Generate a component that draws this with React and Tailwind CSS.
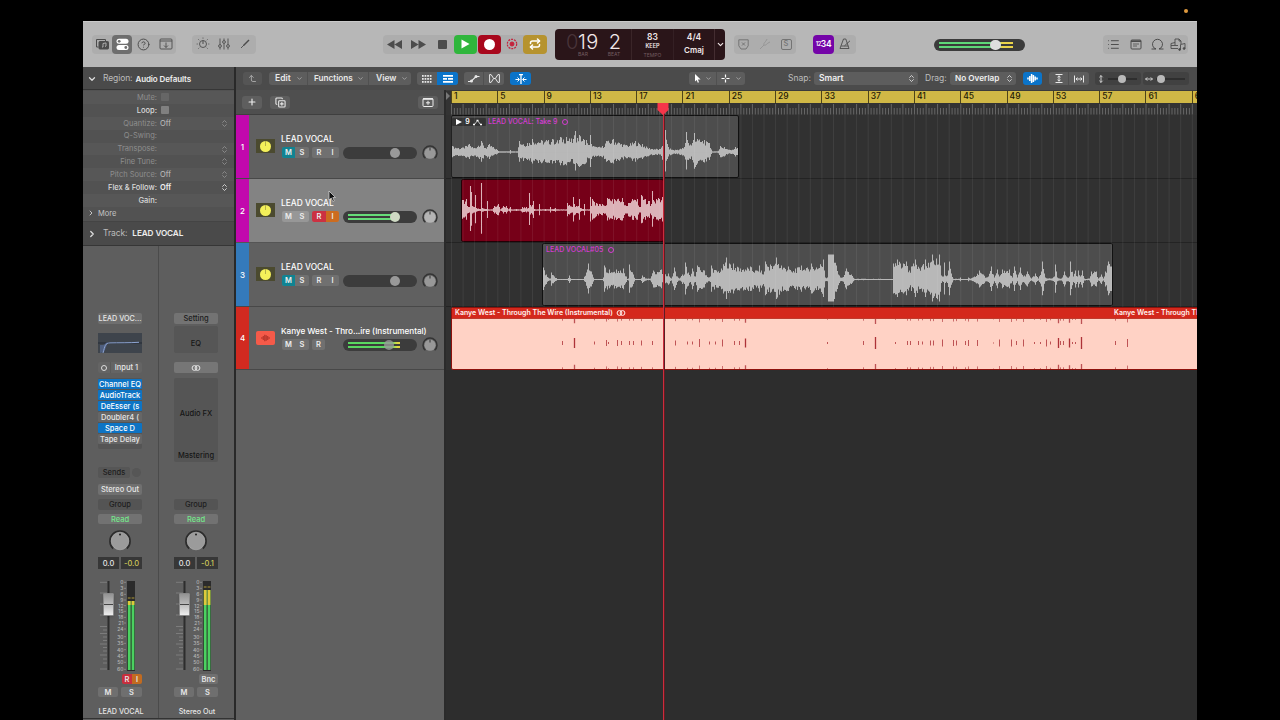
import React from 'react';
import {
    ChevronDown, ChevronRight, ChevronsUpDown, CircleHelp, Plus, Repeat, CornerLeftUp, List,
    CopyPlus, MoveHorizontal, MoveVertical,
} from 'lucide-react';

const BAR = 11.575;

const TAKE_WAVE = [[0, 6], [9, 4], [17, 8], [22, 4], [29, 11], [33, 4], [37, 8], [44, 3], [47, 0.6], [57, 0.6], [58, 2], [59, 0.6], [65, 0.6], [67, 11], [75, 9], [80, 13], [94, 12], [100, 13], [107, 12], [108, 15], [114, 15], [121, 13], [123, 21], [125, 14], [127, 17], [134, 12], [136, 7], [137, 7], [138, 17], [139, 8], [144, 5], [150, 6], [154, 11], [161, 13], [174, 7], [183, 11], [190, 8], [197, 4], [208, 3], [211, 12], [213, 22], [215, 8], [216, 5], [221, 2], [230, 4], [232, 5], [234, 20], [236, 9], [240, 9], [242, 19], [245, 13], [252, 12], [257, 9], [260, 0.6], [265, 0.6], [268, 6], [272, 5], [278, 2], [283, 5], [286, 4]];
const RECORD_WAVE = [[0, 10], [4, 11], [5, 4], [7, 3], [8, 24], [9, 18], [10, 4], [12, 3], [13, 15], [14, 2], [18, 1], [19, 27], [20, 2], [24, 1], [25, 9], [26, 0.5], [30, 0.5], [32, 4], [36, 6], [38, 0.5], [41, 4], [44, 4], [46, 0.5], [48, 3], [49, 0.5], [53, 0.5], [54, 1], [55, 0.5], [58, 0.5], [60, 3], [64, 3], [66, 2], [67, 17], [68, 5], [70, 5], [71, 9], [72, 1], [73, 0.5], [76, 0.5], [77, 6], [78, 0.5], [82, 0.5], [83, 1], [84, 0.5], [87, 0.5], [88, 3], [89, 0.5], [93, 2], [94, 0.5], [104, 0.5], [105, 7], [107, 5], [110, 3], [111, 13], [112, 6], [116, 4], [117, 11], [118, 2], [121, 1], [122, 6], [123, 0.5], [127, 0.5], [128, 13], [129, 4], [130, 11], [134, 7], [140, 6], [143, 4], [145, 12], [152, 11], [160, 12], [164, 4], [165, 4], [166, 7], [170, 11], [175, 11], [177, 3], [178, 3], [179, 15], [183, 11], [187, 9], [188, 4], [189, 6], [190, 19], [191, 10], [196, 12], [200, 13]];
const VOCAL_WAVE = [[0, 12], [3, 5], [6, 1], [7, 1], [8, 7], [11, 3], [14, 0.6], [24, 0.6], [26, 4], [28, 0.6], [40, 0.6], [43, 7], [45, 16], [48, 8], [49, 5], [51, 0.6], [59, 0.6], [60, 2], [61, 14], [66, 10], [73, 10], [80, 11], [83, 3], [84, 0.6], [85, 1], [86, 15], [90, 5], [92, 0.6], [97, 0.6], [99, 4], [103, 1], [107, 1], [110, 9], [118, 10], [120, 1], [121, 5], [125, 6], [128, 1], [131, 12], [134, 3], [136, 1], [139, 5], [141, 5], [142, 17], [145, 7], [147, 3], [149, 11], [152, 3], [154, 14], [161, 9], [165, 2], [167, 3], [168, 14], [173, 9], [178, 11], [183, 22], [187, 15], [190, 16], [195, 12], [207, 13], [213, 9], [216, 14], [220, 5], [221, 8], [222, 18], [227, 15], [231, 14], [233, 22], [238, 14], [245, 13], [248, 8], [252, 11], [258, 14], [261, 10], [268, 16], [273, 12], [280, 20], [281, 9], [282, 2], [284, 2], [285, 25], [290, 25], [293, 14], [296, 4], [299, 2], [303, 11], [308, 5], [311, 0.8], [349, 0.6], [350, 16], [354, 20], [360, 16], [363, 18], [366, 9], [368, 13], [372, 20], [376, 11], [379, 14], [382, 20], [387, 17], [389, 25], [393, 21], [396, 25], [397, 14], [398, 4], [400, 3], [401, 17], [402, 4], [404, 4], [406, 18], [408, 6], [410, 0.8], [416, 0.8], [417, 2], [418, 0.6], [424, 0.6], [425, 2], [427, 0.8], [431, 3], [436, 9], [440, 5], [443, 2], [445, 3], [448, 13], [451, 2], [454, 10], [456, 3], [459, 10], [463, 8], [466, 10], [469, 2], [471, 13], [474, 2], [477, 12], [480, 3], [484, 8], [488, 1], [492, 6], [495, 1], [498, 8], [499, 18], [502, 2], [508, 1], [511, 3], [512, 15], [514, 2], [518, 1], [521, 8], [524, 2], [526, 3], [527, 18], [530, 3], [532, 9], [534, 3], [535, 9], [537, 3], [539, 9], [541, 1], [546, 1], [548, 8], [553, 8], [555, 1], [558, 5], [560, 1], [562, 8], [565, 18], [567, 13], [568, 13]];

// x offset and half height of every drum hit in the instrumental
const HITS = [[111, 2], [123, 5], [143, 1.5], [155, 3], [157, 1], [166, 3], [170, 2], [178, 2], [182, 2], [190, 2.5], [201, 2], [212, 4], [224, 2.5], [236, 1.5], [241, 1.5], [248, 4], [258, 1.5], [264, 1.5], [271, 3.5], [283, 2], [288, 2], [294, 4.5], [376, 1], [412, 2], [424, 6], [444, 1], [456, 2], [459, 2], [467, 2], [471, 1.5], [479, 2.5], [482, 2.5], [491, 3.5], [502, 3], [505, 2.5], [514, 2], [517, 3], [526, 3], [542, 0.5], [548, 3.5], [560, 3.5], [565, 2], [572, 3.5], [583, 1], [589, 1], [595, 3.5], [599, 1.5], [607, 5], [609, 2], [612, 2], [618, 4.5], [621, 1], [624, 1], [630, 6], [664, 2], [676, 4]];

function noise(n) {
    const v = Math.sin(n * 12.9898) * 43758.5453;
    return v - Math.floor(v);
}

function wavePath(points, mid) {
    const last = points[points.length - 1][0];
    let path = '';
    let seg = 0;
    for (let x = 0; x <= last; x += 1) {
        while (seg < points.length - 2 && points[seg + 1][0] < x) seg += 1;
        const [x0, a0] = points[seg];
        const [x1, a1] = points[seg + 1];
        const amp = a0 + ((a1 - a0) * (x - x0)) / (x1 - x0);
        const keep = amp > 24.5 || x === x1 || x === x0;
        const up = keep ? 1 : 0.55 + 0.45 * noise(x);
        const down = keep ? 0.88 : 0.5 + 0.42 * noise(x + 500);
        path += `M${x + 0.5} ${(mid - amp * up).toFixed(1)}V${(mid + amp * down).toFixed(1)}`;
    }
    return path;
}

function Wave({ points, mid, className }) {
    return (
        <svg className={`absolute inset-0 h-full w-full ${className}`}>
            <path d={wavePath(points, mid)} stroke="currentColor" strokeWidth="1.05" />
            <path d={`M0 ${mid}H${points[points.length - 1][0]}`} stroke="currentColor" strokeWidth="0.8" />
        </svg>
    );
}

function ToolGroup({ className, children }) {
    return <div className={`flex h-[19px] shrink-0 items-center rounded-[4px] bg-[#adadad] text-[#4c4c4c] ${className}`}>{children}</div>;
}

function Cell({ className = '', children }) {
    return <div className={`flex h-full shrink-0 items-center justify-center ${className}`}>{children}</div>;
}

function Lcd() {
    return (
        <div className="ml-2 flex h-[31px] w-[170px] shrink-0 rounded-[4px] bg-[#2a1519] text-[#f2e8e9]">
            <div className="flex w-[77px] border-r border-[#3a2528] pl-[11px]">
                <div className="w-[41px]">
                    <div className="flex h-[23px] pt-[1px] text-[20px] font-light leading-[24px]">
                        <span className="w-[12px] text-[#49343a]">0</span>
                        <span className="tracking-[0.5px]">19</span>
                    </div>
                    <div className="pl-[12px] text-[5px] leading-[5px] text-[#725b60]">BAR</div>
                </div>
                <div className="w-[16px] text-center">
                    <div className="h-[23px] pt-[1px] text-[20px] font-light leading-[24px]">2</div>
                    <div className="-ml-[2px] text-[5px] leading-[5px] text-[#725b60]">BEAT</div>
                </div>
            </div>
            <div className="flex w-[41px] flex-col items-center pt-[3px] font-semibold">
                <div className="text-[8.5px] leading-[10px]">83</div>
                <div className="text-[5.5px] leading-[9px]">KEEP</div>
                <div className="text-[5px] font-normal leading-[9px] text-[#725b60]">TEMPO</div>
            </div>
            <div className="flex w-[41px] flex-col items-center border-l border-[#342024] pt-[2px] text-[8.5px] font-semibold">
                <div className="leading-[12px]">4/4</div>
                <div className="leading-[14px] text-[8px]">Cmaj</div>
            </div>
            <div className="flex items-center border-l border-[#442d31] pl-px"><ChevronDown size={9} strokeWidth={3} /></div>
        </div>
    );
}

function Toolbar() {
    return (
        <div className="flex h-[46px] items-center border-t border-[#c9c9c9] bg-[#b7b7b7] pb-[1px] pl-[9px]">
            <ToolGroup className="w-[84px]">
                <Cell className="w-[20px]">
                    <svg width="15" height="12" viewBox="0 0 15 12" fill="none" stroke="currentColor">
                        <path d="M3.5 9H1.5V1.5h9V3" />
                        <rect x="4" y="3.5" width="9.5" height="7.5" rx="0.8" fill="currentColor" />
                        <path d="M8 9V5.5l3-.6V8M8 9H7M11 8.3h-1" stroke="#b7b7b7" strokeWidth="0.9" />
                    </svg>
                </Cell>
                <Cell className="w-[20px] rounded-[4px] bg-[#6e6e6e] text-white">
                    <svg width="13" height="13" viewBox="0 0 13 13">
                        <rect x="0.5" y="0.8" width="12" height="5" rx="2.5" fill="white" />
                        <rect x="0.5" y="7" width="12" height="5" rx="2.5" fill="white" />
                        <circle cx="3.2" cy="3.3" r="1.4" fill="#6e6e6e" />
                        <circle cx="9.8" cy="9.5" r="1.4" fill="#6e6e6e" />
                    </svg>
                </Cell>
                <Cell className="w-[23px]"><CircleHelp size={13} strokeWidth={1.8} /></Cell>
                <Cell className="w-[21px]">
                    <svg width="14" height="12" viewBox="0 0 14 12" fill="none" stroke="currentColor" strokeWidth="0.9">
                        <rect x="1" y="1" width="12" height="10" rx="1" />
                        <path d="M1 3h12M7 4.5v5M5 7.5l2 2 2-2" />
                    </svg>
                </Cell>
            </ToolGroup>
            <ToolGroup className="ml-4 w-[64px]">
                <Cell className="w-[21px]">
                    <svg width="14" height="14" viewBox="0 0 14 14" fill="none" stroke="currentColor">
                        <circle cx="7" cy="7" r="3.5" strokeWidth="0.9" />
                        <path d="M7 3.5V7" />
                        <path d="M7 .6v1M.7 7h1M12.3 7h1M2.4 2.4l.8.8M11.6 2.4l-.8.8M2.4 11.6l.8-.8M11.6 11.6l-.8-.8" strokeWidth="0.9" />
                    </svg>
                </Cell>
                <Cell className="w-[22px]">
                    <svg width="12" height="12" viewBox="0 0 12 12" fill="none" stroke="currentColor" strokeWidth="0.9">
                        <path d="M2 .5v6M2 9.5v2M6 .5v2M6 5.5v6M10 .5v6M10 9.5v2" />
                        <circle cx="2" cy="8" r="1.4" />
                        <circle cx="6" cy="4" r="1.4" />
                        <circle cx="10" cy="8" r="1.4" />
                    </svg>
                </Cell>
                <Cell className="w-[20px]">
                    <svg width="10" height="10" viewBox="0 0 10 10" stroke="currentColor"><path d="M1 9l3-3" strokeWidth="0.9" /><path d="M3.5 6.5L9 1" strokeWidth="1.4" /></svg>
                </Cell>
            </ToolGroup>
            <ToolGroup className="ml-[127px] w-[164px]">
                <Cell className="w-[22px]"><svg width="15" height="9" viewBox="0 0 15 9" fill="currentColor"><path d="M7.5 0v9L0 4.5zM15 0v9L7.5 4.5z" /></svg></Cell>
                <Cell className="w-[26px]"><svg width="15" height="9" viewBox="0 0 15 9" fill="currentColor"><path d="M0 0v9l7.5-4.5zM7.5 0v9L15 4.5z" /></svg></Cell>
                <Cell className="w-[22px]"><div className="h-[9px] w-[9px] rounded-[1px] bg-[#4c4c4c]" /></Cell>
                <Cell className="ml-px w-[23px] rounded-[4px] bg-[#2fb63c]">
                    <svg width="9" height="10" viewBox="0 0 9 10" fill="white"><path d="M.5.5v9l8-4.5z" /></svg>
                </Cell>
                <Cell className="ml-px w-[23px] rounded-[4px] bg-[#a8071c]"><div className="h-[11px] w-[11px] rounded-full bg-white" /></Cell>
                <Cell className="w-[22px]">
                    <svg width="12" height="12" viewBox="0 0 12 12" fill="none" stroke="#c4233c">
                        <circle cx="6" cy="6" r="4.7" strokeWidth="1.2" strokeDasharray="2 0.95" />
                        <circle cx="6" cy="6" r="2" fill="#c4233c" />
                    </svg>
                </Cell>
                <Cell className="w-[24px] rounded-[4px] bg-[#b6932f] text-white"><Repeat size={12} strokeWidth={3} /></Cell>
            </ToolGroup>
            <Lcd />
            <ToolGroup className="ml-[9px] w-[62px] text-[#747474]">
                <Cell className="w-[19px]">
                    <svg width="11" height="11" viewBox="0 0 11 11" fill="none" stroke="currentColor"><path d="M.8.8h9.4v6L8 10H3L.8 6.8zM4 3.5l3 3M7 3.5l-3 3" /></svg>
                </Cell>
                <Cell className="w-[23px] text-[#969696]">
                    <svg width="12" height="12" viewBox="0 0 12 12" fill="none" stroke="currentColor"><path d="M1 11l4-4M5 7c-1-2 2-3 3-6M5 7c2 1 3-2 6-3" /></svg>
                </Cell>
                <Cell className="w-[20px]"><div className="flex h-[11px] w-[11px] items-center justify-center rounded-[2px] border border-current text-[7.5px] font-medium">S</div></Cell>
            </ToolGroup>
            <ToolGroup className="ml-[17px] w-[43px]">
                <Cell className="w-[21px] rounded-[4px] bg-[#7404a8] font-semibold tracking-[-0.3px] text-white">
                    <span className="text-[5.5px]">12</span><span className="text-[8.5px]">34</span>
                </Cell>
                <Cell className="w-[22px]">
                    <svg width="12" height="12" viewBox="0 0 12 12" fill="none" stroke="currentColor"><path d="M4.5 1h2.3L10 10.5H1zM2.2 8h7M5.5 7.8L11 2.8" strokeWidth="0.9" /></svg>
                </Cell>
            </ToolGroup>
            <div className="ml-[78px] mt-[1px] flex h-[12px] w-[91px] shrink-0 items-center rounded-full bg-[#3b3b3b] px-[5px]">
                <div className="relative flex w-[74px] flex-col gap-[2px]">
                    <div className="h-[2px] bg-linear-to-r from-[#5fd878] from-80% to-[#ead34a] to-85%" />
                    <div className="h-[2px] bg-linear-to-r from-[#5fd878] from-80% to-[#ead34a] to-85%" />
                    <div className="absolute -top-[2px] left-[51px] h-[10px] w-[11px] rounded-full bg-[#dedede]" />
                </div>
            </div>
            <ToolGroup className="ml-[78px] w-[85px]">
                <Cell className="w-[21px]"><List size={13} strokeWidth={1.8} /></Cell>
                <Cell className="w-[23px]">
                    <svg width="12" height="11" viewBox="0 0 12 11" fill="none" stroke="currentColor"><rect x="1" y="1" width="10" height="9" rx="1" /><path d="M1 2.2h10" strokeWidth="1.6" /><path d="M3 5h6M3 7h4" strokeWidth="0.8" /></svg>
                </Cell>
                <Cell className="w-[20px]">
                    <svg width="13" height="12" viewBox="0 0 13 12" fill="none" stroke="currentColor"><path d="M.5 11h4.300a5 5 0 1 1 3.400 0h4.300M4.800 11L4 10M8.200 11L9 10" /></svg>
                </Cell>
                <Cell className="w-[21px]">
                    <svg width="16" height="13" viewBox="0 0 16 13" fill="none" stroke="currentColor" strokeWidth="0.9">
                        <path d="M5 4.5L1 5.5v5h7M1 7.5h7M5 7V1h4l2 2v3M9 1v2h2" />
                        <path d="M10.5 11.5V6.5L15 5.5v5" />
                        <circle cx="9.6" cy="11.5" r=".9" fill="currentColor" />
                        <circle cx="14.1" cy="10.5" r=".9" fill="currentColor" />
                    </svg>
                </Cell>
            </ToolGroup>
        </div>
    );
}

const REGION_PARAMS = [
    { label: 'Mute:', box: true, dim: true },
    { label: 'Loop:', box: true },
    { label: 'Quantize:', value: 'Off', arrows: true, dim: true },
    { label: 'Q-Swing:', dim: true },
    { label: 'Transpose:', arrows: true, dim: true },
    { label: 'Fine Tune:', arrows: true, dim: true },
    { label: 'Pitch Source:', value: 'Off', arrows: true, dim: true },
    { label: 'Flex & Follow:', value: 'Off', arrows: true },
    { label: 'Gain:' },
];

function RegionInspector() {
    return (
        <div>
            <div className="flex h-[23px] items-center border-b border-[#363636] bg-[#4a4a4a] pl-[4px] pt-[1px] text-[8.5px] tracking-[-0.1px]">
                <ChevronDown size={10} strokeWidth={3} className="text-[#ddd]" />
                <span className="ml-[6px] text-[#bcbcbc]">Region:</span>
                <span className="ml-[3px] whitespace-nowrap text-[8px] font-semibold text-[#eee]">Audio Defaults</span>
            </div>
            <div className="h-[131px] bg-[#525252] pt-[1px]">
                {REGION_PARAMS.map((p) => (
                    <div key={p.label} className={`flex h-[12.9px] items-center text-[7.5px] odd:bg-[#575757] ${p.dim ? 'text-[#8e8e8e]' : 'font-medium text-[#dadada]'}`}>
                        <span className="w-[74px] text-right">{p.label}</span>
                        {p.box && <span className={`ml-[4px] h-[8px] w-[8px] rounded-[1px] ${p.dim ? 'bg-[#666]' : 'bg-[#808080]'}`} />}
                        <span className={`ml-[3px] ${p.dim ? 'text-[#c0c0c0]' : 'font-semibold text-[#f0f0f0]'}`}>{p.value}</span>
                        {p.arrows && <ChevronsUpDown size={9} strokeWidth={2.4} className="ml-auto mr-[5px]" />}
                    </div>
                ))}
                <div className="flex h-[12.9px] items-center pl-[4px] text-[7.5px] text-[#c4c4c4]">
                    <ChevronRight size={8} strokeWidth={3} />
                    <span className="ml-[3px]">More</span>
                </div>
            </div>
            <div className="flex h-[25px] items-center border-b border-t border-[#363636] border-t-[#444] bg-[#4a4a4a] pl-[4px] text-[8.5px] tracking-[-0.1px]">
                <ChevronRight size={10} strokeWidth={3} className="text-[#ddd]" />
                <span className="ml-[6px] text-[#bcbcbc]">Track:</span>
                <span className="ml-[5px] text-[8.200px] font-semibold text-[#eee]">LEAD VOCAL</span>
            </div>
        </div>
    );
}

const SCALE = [['0', 2.3], ['3', 8.3], ['6', 14.3], ['9', 20], ['12', 25.7], ['15', 31.3], ['18', 37.3], ['21', 43], ['24', 49], ['30', 56.7], ['35', 63.3], ['40', 69.7], ['45', 76], ['50', 82.3], ['60', 89.3]];
const FADER_TICKS = [2.3, 13, 24, 35, 46.5, 50, 53.5, 57, 60.5, 64, 67.5, 71, 75, 79, 83, 89];

function LevelFader({ level, hot }) {
    return (
        <div className="relative mt-[11px] flex h-[92px]">
            <svg width="44" height="92" fontFamily="Inter, sans-serif">
                <rect x="9.5" y="1" width="2" height="89" fill="#2d2d2d" />
                {FADER_TICKS.map((y, i) => (
                    <path key={y} d={`M${i < 5 || i % 3 === 0 ? 2 : 5} ${y}H9`} stroke="#8a8a8a" strokeWidth="0.7" />
                ))}
                {SCALE.map(([label, y]) => (
                    <g key={label}>
                        <text x="25.5" y={y + 1.8} textAnchor="end" fontSize="5" fill="#b4b4b4">{label}</text>
                        <path d={`M26 ${y}H28`} stroke="#a5a5a5" strokeWidth="0.6" />
                    </g>
                ))}
                <rect x="29" y="1" width="8" height="90" fill="#2b2b2b" />
                <rect x="29.8" y={level} width="2.8" height={90 - level} fill="#4bd160" />
                <rect x="33.6" y={level} width="2.8" height={90 - level} fill="#4bd160" />
                <rect x="29.8" y={level} width="2.8" height={hot} fill="#dfc93b" />
                <rect x="33.6" y={level} width="2.8" height={hot} fill="#dfc93b" />
                <path d={`M29.8 ${level - 3}h2.8M33.6 ${level - 3}h2.8`} stroke="#b19a34" />
            </svg>
            <div className="absolute left-[5px] top-[13px] flex h-[23px] w-[11px] flex-col rounded-[1px] border border-[#8a8a8a] bg-linear-to-b from-[#939393] via-[#bcbcbc] to-[#eee] shadow">
                <div className="mt-[10px] h-px bg-[#444]" />
            </div>
        </div>
    );
}

const PLUGINS = [['Channel EQ', true], ['AudioTrack', true], ['DeEsser (s', true], ['Doubler4 (', false], ['Space D', true], ['Tape Delay', false]];

function StripKnob() {
    return (
        <svg className="mx-auto mt-[5px]" width="24" height="24" viewBox="0 0 24 24">
            <path d="M5.2 19.5A10 10 0 1 1 18.8 19.5" fill="none" stroke="#2c2c2c" strokeWidth="1.8" />
            <circle cx="12" cy="12" r="8.8" fill="#9b9b9b" stroke="#b3b3b3" strokeWidth="0.6" />
            <circle cx="12" cy="5.5" r="1" fill="#222" />
        </svg>
    );
}

function ChannelStrip({ output, name, peak, level, hot }) {
    return (
        <div className={`w-[76px] shrink-0 pl-[15px] text-[7.5px] font-medium text-[#e6e6e6] ${output ? '' : 'border-r border-[#4b4b4b]'}`}>
            <div className="flex w-[44px] flex-col text-center leading-[12px]">
                <div className={`mt-[67px] h-[11px] whitespace-nowrap rounded-[2px] ${output ? 'bg-[#737373] text-[#1c1c1c]' : 'bg-[#6f6f6f] text-[7.200px]'}`}>{output ? 'Setting' : 'LEAD VOC...'}</div>
                {output ? (
                    <div className="mt-[2px] h-[27px] rounded-[2px] bg-[#565656] pt-[12px] text-[#161616]">EQ</div>
                ) : (
                    <svg className="mt-[9px] bg-[#3e444c]" width="44" height="20" viewBox="0 0 44 20">
                        <path d="M0 10h44" stroke="#242a34" />
                        <path d="M2 20V12h3c2 0 2-2.500 5-2.700L6 19z" fill="#54678c" opacity="0.8" />
                        <path d="M5 20C7 13 7 10 12 9.900c8-.2 20 0 29-.6" fill="none" stroke="#8da4d2" />
                    </svg>
                )}
                {output ? (
                    <div className="mt-[9px] flex h-[11px] items-center justify-center rounded-[2px] bg-[#767676]"><StereoIcon /></div>
                ) : (
                    <div className="mt-[9px] flex h-[11px] rounded-[2px] bg-[#646464]">
                        <span className="flex w-[13px] items-center justify-center border-r border-[#5a5a5a]"><span className="h-[6px] w-[6px] rounded-full border border-[#ddd]" /></span>
                        <span className="flex-1 whitespace-nowrap">Input 1</span>
                    </div>
                )}
                {output ? (
                    <div className="mt-[5px] flex h-[84px] flex-col rounded-[2px] bg-[#555] pt-[30px] text-[#161616]">
                        <span>Audio FX</span>
                        <span className="mt-[30px]">Mastering</span>
                    </div>
                ) : (
                    <div className="mt-[5px] flex h-[71px] flex-col gap-px rounded-[2px] bg-[#555] pt-[1px]">
                        {PLUGINS.map(([plugin, on]) => (
                            <div key={plugin} className={`h-[10px] overflow-hidden whitespace-nowrap rounded-[1px] leading-[11px] ${on ? 'bg-[#0d74c4] text-white' : 'bg-[#666]'}`}>{plugin}</div>
                        ))}
                    </div>
                )}
                {output ? <div className="h-[33px]" /> : (
                    <>
                        <div className="mt-[18px] flex h-[11px] gap-[2px] text-[#1d1d1d]">
                            <span className="w-[32px] rounded-[2px] bg-[#565656]">Sends</span>
                            <span className="my-px w-[9px] rounded-full bg-[#565656]" />
                        </div>
                        <div className="mt-[6px] h-[11px] whitespace-nowrap rounded-[2px] bg-[#707070]">Stereo Out</div>
                    </>
                )}
                <div className="mt-[4px] h-[11px] rounded-[2px] bg-[#545454] text-[#1d1d1d]">Group</div>
                <div className="mt-[4px] h-[10px] rounded-[2px] bg-[#727272] leading-[11px] text-[#74e78a]">Read</div>
                <StripKnob />
                <div className="mt-[4px] flex h-[12px] gap-[2px] leading-[13px]">
                    <span className="flex-1 bg-[#373737]">0.0</span>
                    <span className="flex-1 bg-[#373737] text-[#cfc75a]">{peak}</span>
                </div>
                <LevelFader level={level} hot={hot} />
                <div className="mt-[2px] flex h-[10px] justify-end font-semibold leading-[11px]">
                    {output ? <span className="w-[19px] rounded-[2px] bg-[#707070]">Bnc</span> : (
                        <>
                            <span className="w-[10px] rounded-l-[2px] bg-[#c92f3d]">R</span>
                            <span className="w-[10px] rounded-r-[2px] bg-[#c26b20]">I</span>
                        </>
                    )}
                </div>
                <div className="mt-[3px] flex h-[10px] justify-between font-semibold leading-[11px]">
                    <span className="w-[20px] rounded-[2px] bg-[#6f6f6f]">M</span>
                    <span className="w-[21px] rounded-[2px] bg-[#6f6f6f]">S</span>
                </div>
                <div className="-mx-2 mt-[8px] h-[12px] whitespace-nowrap pl-[2px] text-[7.200px] leading-[13px]">{name}</div>
            </div>
        </div>
    );
}

function StereoIcon() {
    return (
        <svg className="shrink-0" width="10" height="6" viewBox="0 0 10 6" fill="none" stroke="currentColor"><circle cx="3.500" cy="3" r="2.4" /><circle cx="6.500" cy="3" r="2.400" /></svg>
    );
}

function MenuButton({ className, children }) {
    return <div className={`flex h-full items-center justify-between ${className}`}>{children}<ChevronDown size={7} strokeWidth={2.500} className="text-[#b5b5b5]" /></div>;
}

function Select({ className, children }) {
    return (
        <div className={`flex h-[13px] shrink-0 items-center justify-between rounded-[3px] bg-[#5d5d5d] pl-[5px] pr-[2px] font-semibold text-[#f0f0f0] ${className}`}>
            {children}<ChevronsUpDown size={9} strokeWidth={2} />
        </div>
    );
}

function TrackMenuBar() {
    return (
        <div className="flex h-[23px] items-center bg-[#4b4b4b] pl-[7px] text-[8.5px] text-[#e8e8e8]">
            <div className="flex h-[13px] w-[19px] shrink-0 items-center justify-center rounded-[3px] bg-[#555] text-[#aaa]"><CornerLeftUp size={9} strokeWidth={2.500} /></div>
            <div className="ml-[7px] flex h-[13px] w-[142px] shrink-0 rounded-[3px] bg-[#5d5d5d] font-semibold">
                <MenuButton className="w-[39px] border-r border-[#505050] pl-[6px] pr-[4px]">Edit</MenuButton>
                <MenuButton className="w-[61px] border-r border-[#505050] pl-[6px] pr-[4px]"><span className="text-[8.200px]">Functions</span></MenuButton>
                <MenuButton className="w-[42px] pl-[7px] pr-[3px]">View</MenuButton>
            </div>
            <div className="ml-[6px] flex h-[13px] shrink-0 overflow-hidden rounded-[3px] bg-[#5d5d5d]">
                <Cell className="w-[20px]">
                    <svg width="10" height="8" viewBox="0 0 10 8" fill="currentColor">{[0, 3, 6].map((y) => [0, 2.600, 5.200, 7.800].map((x) => <rect key={`${x}-${y}`} x={x} y={y} width="1.700" height="1.800" />))}</svg>
                </Cell>
                <Cell className="w-[21px] bg-[#0b74c9]">
                    <svg width="10" height="8" viewBox="0 0 10 8" fill="white"><path d="M0 0h10v1.700H0zM0 3h4v1.700H0zM5 3h5v1.700H5zM0 6h10v1.700H0z" /></svg>
                </Cell>
            </div>
            <div className="ml-[6px] flex h-[13px] shrink-0 rounded-[3px] bg-[#5d5d5d]">
                <Cell className="w-[20px] border-r border-[#505050]"><svg width="12" height="9" viewBox="0 0 12 9" fill="none" stroke="currentColor" strokeWidth="1.200"><path d="M0 7.500h3l5-5h3.500" /><circle cx="3.500" cy="7" r=".9" /><circle cx="8" cy="2.500" r=".9" /></svg></Cell>
                <Cell className="w-[20px]"><svg width="11" height="9" viewBox="0 0 11 9" fill="none" stroke="currentColor"><path d="M.6.600v7.800h1.500L4.600 4.500 2.100.6zM10.400.6v7.800H8.900L6.400 4.500 8.900.6zM4.600 4.500h1.800" /></svg></Cell>
            </div>
            <div className="ml-[6px] flex h-[13px] w-[21px] shrink-0 items-center justify-center rounded-[3px] bg-[#0b74c9]">
                <svg width="12" height="10" viewBox="0 0 12 10" fill="none" stroke="white"><path d="M4 .7h4M6 0v10" strokeWidth="1.300" /><path d="M.5 5.500H4M8 5.500h3.500M2.500 3.500l2 2-2 2M9.500 3.500l-2 2 2 2" /></svg>
            </div>
            <div className="ml-[158px] flex h-[13px] w-[56px] shrink-0 rounded-[3px] bg-[#5d5d5d]">
                <MenuButton className="w-[28px] border-r border-[#505050] pl-[6px] pr-[4px]">
                    <svg width="6" height="9" viewBox="0 0 6 9" fill="white"><path d="M0 0v7.500l1.700-1.500L2.800 8.800l1.200-.5L2.900 5.600H5.600z" /></svg>
                </MenuButton>
                <MenuButton className="w-[28px] pl-[4px] pr-[3px]">
                    <svg width="9" height="9" viewBox="0 0 9 9" stroke="white" strokeWidth="1.200"><path d="M4.500.500V3.600M4.500 5.400V8.500M.5 4.500H3.600M5.400 4.500H8.500" /></svg>
                </MenuButton>
            </div>
            <span className="ml-[43px] w-[26px] text-[#bdbdbd]">Snap:</span>
            <Select className="w-[104px]">Smart</Select>
            <span className="ml-[7px] w-[25px] text-[#bdbdbd]">Drag:</span>
            <Select className="w-[66px]"><span className="whitespace-nowrap text-[8.200px]">No Overlap</span></Select>
            <div className="ml-[7px] flex h-[13px] w-[19px] shrink-0 items-center justify-center rounded-[3px] bg-[#0b74c9]">
                <svg width="11" height="9" viewBox="0 0 11 9" stroke="white" strokeWidth="1.500"><path d="M1 3.500v2M2.800 2v5M4.600 0v9M6.400 1v7M8.200 2.500v4M10 3.500v2" /></svg>
            </div>
            <div className="ml-[7px] flex h-[13px] w-[40px] shrink-0 rounded-[3px] bg-[#5d5d5d]">
                <Cell className="w-[20px] border-r border-[#505050]"><svg width="8" height="9" viewBox="0 0 8 9" fill="none" stroke="currentColor"><path d="M.5.500h7M.5 8.500h7M4 2v5M2.500 3.200L4 1.800l1.500 1.400M2.500 5.800L4 7.200l1.500-1.400" /></svg></Cell>
                <Cell className="w-[20px]"><svg width="10" height="8" viewBox="0 0 10 8" fill="none" stroke="currentColor"><path d="M.5.500v7M9.500.500v7M2 4h6M3.400 2.500L2 4l1.400 1.500M6.600 2.500L8 4 6.600 5.500" /></svg></Cell>
            </div>
            <div className="ml-[6px] flex h-[13px] w-[46px] shrink-0 items-center rounded-[3px] bg-[#414141] pl-[2px] text-[#ccc]">
                <MoveVertical size={8} strokeWidth={3} /><div className="relative ml-[3px] h-[2px] w-[29px] bg-[#2e2e2e]"><div className="absolute -top-[3px] left-[10px] h-[8px] w-[8px] rounded-full bg-[#b9b9b9]" /></div>
            </div>
            <div className="ml-[2px] flex h-[13px] w-[46px] shrink-0 items-center rounded-[3px] bg-[#414141] pl-[2px] text-[#ccc]">
                <MoveHorizontal size={8} strokeWidth={3} /><div className="relative ml-[3px] h-[2px] w-[29px] bg-[#2e2e2e]"><div className="absolute -top-[3px] left-[1px] h-[8px] w-[8px] rounded-full bg-[#b9b9b9]" /></div>
            </div>
        </div>
    );
}

const TRACKS = [
    { id: 1, name: 'LEAD VOCAL', strip: 'bg-[#c208ad]', muted: true },
    { id: 2, name: 'LEAD VOCAL', strip: 'bg-[#c208ad]', selected: true, armed: true },
    { id: 3, name: 'LEAD VOCAL', strip: 'bg-[#347abb]', muted: true },
    { id: 4, name: 'Kanye West - Thro...ire (Instrumental)', strip: 'bg-[#d22a20]', audio: true },
];

function TrackHeader({ track }) {
    const button = track.selected ? 'bg-[#979797]' : 'bg-[#707070]';
    return (
        <div className={`flex h-[64px] border-b last:h-[63px] ${track.selected ? 'border-[#555] bg-[#838383]' : 'border-[#484848] bg-[#606060]'}`}>
            <div className={`flex w-[13px] shrink-0 items-center justify-center text-[8px] font-medium text-white ${track.strip}`}>{track.id}</div>
            <div className="w-[32px] shrink-0 pl-[7px] pt-[24px]">
                {track.audio ? (
                    <div className="flex h-[14px] w-[19px] items-center justify-center rounded-[2px] bg-[#f55a49]">
                        <svg width="9" height="8" viewBox="0 0 11 9" stroke="#b8362b" strokeWidth="1.500"><path d="M1 3.500v2M2.800 2v5M4.600 .5v8M6.400 1v7M8.200 2v5M10 3.500v2" /></svg>
                    </div>
                ) : (
                    <div className="flex h-[14px] w-[19px] items-center justify-center bg-[#4b4a2f]">
                        <div className="flex h-[11px] w-[11px] justify-center rounded-full bg-[#f4f05a]"><div className="h-[5px] w-px bg-[#b5b148]" /></div>
                    </div>
                )}
            </div>
            <div className="min-w-0 pt-[18px]">
                <div className={`h-[12px] whitespace-nowrap font-medium leading-[12px] text-white ${track.audio ? 'text-[8.200px] tracking-[-0.050px]' : 'text-[8.400px]'}`}>{track.name}</div>
                <div className="mt-[1px] flex h-[13px] items-center pl-px text-[7.5px] font-semibold leading-[12px] text-[#ededed]">
                    <div className={`flex h-[11px] w-[27px] overflow-hidden rounded-[2px] text-center ${button}`}>
                        <span className={`w-[13px] ${track.muted ? 'bg-[#118392]' : ''}`}>M</span><span className="w-[14px]">S</span>
                    </div>
                    <div className="ml-[3px] w-[27px]">
                        <div className={`flex h-[11px] overflow-hidden rounded-[2px] text-center ${button} ${track.audio ? 'w-[13px]' : ''}`}>
                            <span className={`w-[14px] ${track.armed ? 'bg-[#cb3142]' : ''}`}>R</span>
                            {!track.audio && <span className={`w-[13px] ${track.armed ? 'bg-[#cc6c20]' : ''}`}>I</span>}
                        </div>
                    </div>
                    <div className="relative ml-[4px] flex h-[12px] w-[74px] flex-col justify-center gap-[2px] rounded-full bg-[#3c3c3c] px-[5px]">
                        {track.armed && <><div className="h-[2px] w-[50px] bg-[#66dd78]" /><div className="h-[2px] w-[50px] bg-[#66dd78]" /></>}
                        {track.audio && <><div className="h-[2px] w-[52px] bg-linear-to-r from-[#5ad860] from-85% to-[#e0d640] to-95%" /><div className="h-[2px] w-[52px] bg-linear-to-r from-[#5ad860] from-85% to-[#e0d640] to-95%" /></>}
                        <div className={`absolute top-[1px] h-[10px] w-[10px] rounded-full ${track.armed ? 'bg-[#cfdac4]' : 'bg-[#999]'} ${track.audio ? 'left-[41px] opacity-80' : 'left-[47px]'}`} />
                    </div>
                    <svg className="ml-[5px]" width="16" height="16" viewBox="0 0 16 16">
                        <path d="M3.400 13.300A7 7 0 1 1 12.600 13.300" fill="none" stroke="#343434" strokeWidth="1.500" />
                        <circle cx="8" cy="8.200" r="5.600" fill={track.selected ? '#b4b4b4' : '#989898'} />
                        <path d="M8 2.500v3" stroke="#333" />
                    </svg>
                </div>
            </div>
        </div>
    );
}

function HeaderButton({ className = '', children }) {
    return <div className={`flex h-[13px] w-[20px] items-center justify-center rounded-[3px] bg-[#5e5e5e] text-[#ececec] ${className}`}>{children}</div>;
}

function TrackList() {
    return (
        <div className="flex w-[210px] shrink-0 flex-col border-r-2 border-[#2b2b2b] bg-[#606060]">
            <div className="flex h-[25px] items-center border-b border-[#3f3f3f] bg-[#4f4f4f] pl-[6px]">
                <HeaderButton><Plus size={10} strokeWidth={2.800} /></HeaderButton>
                <HeaderButton className="ml-[8px]"><CopyPlus size={11} strokeWidth={2.300} /></HeaderButton>
                <HeaderButton className="ml-auto mr-[6px]">
                    <svg width="12" height="10" viewBox="0 0 12 10" fill="none" stroke="currentColor"><rect x="1" y="1.500" width="10" height="8" rx="1" /><path d="M1 2h10" strokeWidth="1.600" /><path d="M6 3.800v4M4 5.800h4" /></svg>
                </HeaderButton>
            </div>
            <div>{TRACKS.map((t) => <TrackHeader key={t.id} track={t} />)}</div>
        </div>
    );
}

function Ruler() {
    const ticks = Array.from({ length: 257 }, (_, i) => `M${(5.500 + (i * BAR) / 4).toFixed(1)} ${i % 4 === 0 ? 1 : 5}V11.500`).join('');
    return (
        <div className="h-[25px] bg-[#333]">
            <div className="flex h-[13px] overflow-hidden border-t border-[#3b3b3b]">
                <svg className="shrink-0" width="5" height="12" viewBox="0 0 5 12"><path d="M0 1l4 4-4 4z" fill="#777" /></svg>
                {Array.from({ length: 17 }, (_, i) => (
                    <div key={i} className="w-[46.3px] shrink-0 border-l border-[#4e4419] bg-[#d0b846] pl-[2px] text-[8.500px] font-medium leading-[11px] text-[#1d1905]">{i * 4 + 1}</div>
                ))}
            </div>
            <svg width="751" height="12"><path d={ticks} stroke="#747474" strokeWidth="0.8" /></svg>
        </div>
    );
}

function GridLines({ height }) {
    const lines = Array.from({ length: 65 }, (_, i) => `M${(5.500 + i * BAR).toFixed(1)} 0V${height}`).join('');
    return <svg className="pointer-events-none absolute inset-0" width="751" height={height}><path d={lines} stroke="#ffffff" strokeOpacity="0.070" /></svg>;
}

function Instrumental() {
    return (
        <div className="ml-[5px] h-[63px] w-[750px] overflow-hidden rounded-l-[2px] border border-[#8d120c] bg-[#ffd2c5]">
            <div className="flex h-[11px] items-center whitespace-nowrap border-b border-[#c03a2d] bg-[#d4281c] pl-[3px] text-[7px] font-semibold text-[#fff2ef]">
                <span className="w-[161px] shrink-0">Kanye West - Through The Wire (Instrumental)</span>
                <StereoIcon />
                <span className="ml-[488px] shrink-0">Kanye West - Through The Wire (Instrumental)</span>
            </div>
            <svg width="748" height="50" viewBox="0 0 748 50" stroke="#ad3238">
                {HITS.map(([x, h]) => (
                    <g key={x} strokeWidth={h > 4.400 ? 1.300 : 0.800}>
                        <path d={`M${x - 0.500} ${24 - h}V${24 + h}`} />
                        <path d={`M${x - 0.500} 0V${h * 0.850}M${x - 0.500} ${50 - h * 0.850}V50`} strokeOpacity="0.800" />
                    </g>
                ))}
            </svg>
        </div>
    );
}

function Timeline() {
    return (
        <div className="relative min-w-0 flex-1 overflow-hidden bg-[#2d2d2d]">
            <Ruler />
            <div className="relative bg-[#313131]">
                <div className="h-[64px] border-b border-[#232323]">
                    <div className="relative ml-[5px] h-[63px] w-[288px] rounded-[2px] border border-[#111] bg-[#4d4d4d]">
                        <div className="flex h-[12px] items-center whitespace-nowrap text-[7px] font-medium text-[#d63ad2]">
                            <span className="flex h-[8px] w-[34px] items-center justify-between rounded-[1px] bg-[#333] px-[4px] font-semibold text-white">
                                <svg width="6" height="6" viewBox="0 0 6 6" fill="white"><path d="M0 0v6l6-3z" /></svg>
                                9
                                <svg width="9" height="7" viewBox="0 0 9 7" fill="none" stroke="white"><path d="M1.500 5.500l3-4 3 4" strokeWidth="0.700" /><path d="M0 5.500h2M3.500 1.500h2M7 5.500h2" strokeWidth="1.500" /></svg>
                            </span>
                            <span className="ml-[2px] tracking-[-0.050px]">LEAD VOCAL: Take 9</span>
                            <span className="ml-[5px] h-[6px] w-[6px] rounded-full border border-current" />
                        </div>
                        <Wave points={TAKE_WAVE} mid={36} className="text-[#b8b8b8]" />
                    </div>
                </div>
                <div className="h-[64px] border-b border-[#232323]">
                    <div className="relative ml-[15px] h-[63px] w-[203px] rounded-[2px] border border-[#230006] bg-[#760018]">
                        <Wave points={RECORD_WAVE} mid={30} className="text-[#dcb2b8]" />
                    </div>
                </div>
                <div className="h-[64px] border-b border-[#232323]">
                    <div className="relative ml-[96px] h-[63px] w-[571px] rounded-[2px] border border-[#111] bg-[#4d4d4d]">
                        <div className="flex h-[12px] items-center whitespace-nowrap pl-[3px] text-[7px] font-medium text-[#d63ad2]">
                            LEAD VOCAL#05
                            <span className="ml-[5px] h-[6px] w-[6px] rounded-full border border-current" />
                        </div>
                        <Wave points={VOCAL_WAVE} mid={35.500} className="text-[#b8b8b8]" />
                    </div>
                </div>
                <GridLines height={192} />
                <Instrumental />
            </div>
            <div className="absolute bottom-0 left-[217px] top-[13px] w-[2px] border-r border-[#5c1d24] bg-[#cc2c3c]" />
            <svg className="absolute left-[211px] top-[13px]" width="12" height="12" viewBox="0 0 12 12"><path d="M.5 0h11v7L6 12 .5 7z" fill="#f5364a" /></svg>
        </div>
    );
}

export default function App() {
    return (
        <div className="relative h-[720px] w-[1280px] overflow-hidden bg-black pl-[83px] pt-[21px] font-['Inter',sans-serif]">
            <div className="absolute left-[1184px] top-[9px] h-[4px] w-[4px] rounded-full bg-[#e09a3e]" />
            <div className="flex h-[699px] w-[1114px] flex-col">
                <Toolbar />
                <div className="flex min-h-0 flex-1">
                    <div className="w-[153px] shrink-0 border-r-2 border-[#292929] bg-[#5e5e5e]">
                        <RegionInspector />
                        <div className="flex h-[473px] border-b border-[#333]">
                            <ChannelStrip name="LEAD VOCAL" peak="-0.0" level={21} hot={4} />
                            <ChannelStrip output name="Stereo Out" peak="-0.1" level={10} hot={15} />
                        </div>
                    </div>
                    <div className="flex min-w-0 flex-1 flex-col">
                        <TrackMenuBar />
                        <div className="flex min-h-0 flex-1">
                            <TrackList />
                            <Timeline />
                        </div>
                    </div>
                </div>
            </div>
            <svg className="absolute left-[328px] top-[190px]" width="8" height="13" viewBox="0 0 8 13">
                <path d="M1 1v9l2.200-2 1.600 3.500 1.500-.7L4.800 7.500H7.500z" fill="#111" stroke="#ddd" strokeWidth="0.700" />
            </svg>
        </div>
    );
}
